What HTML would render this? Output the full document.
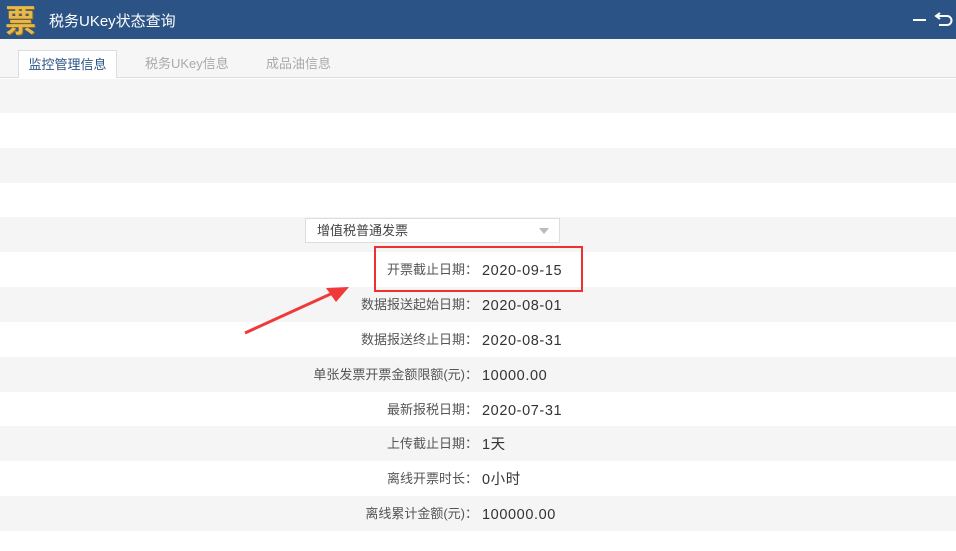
<!DOCTYPE html>
<html><head><meta charset="utf-8"><style>
body{margin:0;width:956px;height:551px;overflow:hidden;font-family:"Liberation Sans","Noto Sans CJK SC",sans-serif;background:#fff;position:relative}
.hd{position:absolute;left:0;top:0;width:956px;height:39px;background:#2c5385}
.logo{position:absolute;left:5px;top:2px;font-size:31px;color:#e8b84a;font-weight:bold;line-height:34px;font-family:"Noto Sans CJK SC",sans-serif;text-shadow:1px 1px 0 #8a6a20}
.title{position:absolute;left:49px;top:10px;color:#fff;font-size:15px}
.tabs{position:absolute;left:0;top:39px;width:956px;height:39px;background:#f6f6f6;border-bottom:1px solid #ddd;box-sizing:border-box}
.tab{position:absolute;top:11px;height:28px;font-size:13px;color:#aaa;line-height:28px}
.tab.a{left:18px;width:99px;background:#fff;border:1px solid #ddd;border-bottom:none;color:#2c5385;text-align:center;box-sizing:border-box}
.row{position:absolute;left:0;width:956px;height:35px}
.g{background:#f5f5f5}
.lab{position:absolute;right:478px;top:0;font-size:13px;color:#555;line-height:35px;white-space:nowrap}
.val{position:absolute;left:482px;top:2px;font-size:14.5px;letter-spacing:0.6px;color:#333;line-height:35px}
</style></head><body>
<div class="hd"><div class="logo">票</div><div class="title">税务UKey状态查询</div>
<div style="position:absolute;left:913px;top:19px;width:13px;height:2px;background:#fff"></div>
<svg style="position:absolute;left:934px;top:10px" width="20" height="20" viewBox="0 0 20 20"><path d="M6 3 L2 6 L6 9 M2 6 H13 a4.5 4.5 0 0 1 0 9 H5" fill="none" stroke="#fff" stroke-width="2"/></svg>
</div>
<div class="tabs">
<div class="tab a">监控管理信息</div>
<div class="tab" style="left:145px">税务UKey信息</div>
<div class="tab" style="left:266px">成品油信息</div>
</div>
<div class="row g" style="top:79px;height:34px"></div>
<div class="row g" style="top:148px"></div>
<div class="row g" style="top:217px"></div>
<div style="position:absolute;left:305px;top:218px;width:255px;height:25px;background:#fff;border:1px solid #ddd;box-sizing:border-box;font-size:13px;color:#444;line-height:23px;padding-left:11px">增值税普通发票<span style="position:absolute;right:10px;top:9px;border:5px solid transparent;border-top:6px solid #bbb;border-bottom:0"></span></div>
<div class="row" style="top:252px"><span class="lab">开票截止日期：</span><span class="val">2020-09-15</span></div>
<div class="row g" style="top:287px"><span class="lab">数据报送起始日期：</span><span class="val">2020-08-01</span></div>
<div class="row" style="top:322px"><span class="lab">数据报送终止日期：</span><span class="val">2020-08-31</span></div>
<div class="row g" style="top:357px"><span class="lab">单张发票开票金额限额(元)：</span><span class="val">10000.00</span></div>
<div class="row" style="top:392px"><span class="lab">最新报税日期：</span><span class="val">2020-07-31</span></div>
<div class="row g" style="top:426px"><span class="lab">上传截止日期：</span><span class="val">1天</span></div>
<div class="row" style="top:461px"><span class="lab">离线开票时长：</span><span class="val">0小时</span></div>
<div class="row g" style="top:496px"><span class="lab">离线累计金额(元)：</span><span class="val">100000.00</span></div>
<div style="position:absolute;left:374px;top:246px;width:209px;height:46px;border:2px solid #f03030;box-sizing:border-box"></div>
<svg style="position:absolute;left:0;top:0" width="956" height="551"><path d="M245 333 L335 292" stroke="#f03a3a" stroke-width="3"/><path d="M349 287 L326 288 L336 302 Z" fill="#f03a3a"/></svg>
</body></html>
